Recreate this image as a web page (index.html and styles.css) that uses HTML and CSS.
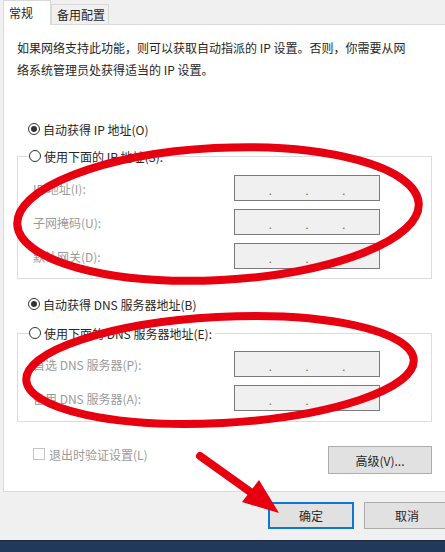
FILE: index.html
```html
<!DOCTYPE html>
<html lang="zh-CN">

<head>
    <meta charset="UTF-8">
    <meta name="viewport" content="width=device-width, initial-scale=1.0">
    <title>Internet 协议版本 4 (TCP/IPv4) 属性</title>
    <link rel="stylesheet" href="styles.css">
</head>

<body>
    <div class="dialog">
        <div class="tabs">
            <div class="tab active">常规</div>
            <div class="tab">备用配置</div>
        </div>

        <div class="panel">
            <p class="intro">如果网络支持此功能，则可以获取自动指派的 IP 设置。否则，你需要从网络系统管理员处获得适当的 IP 设置。</p>

            <div class="option first">
                <span class="radio checked"></span>
                <span>自动获得 IP 地址(O)</span>
            </div>

            <fieldset class="group">
                <legend class="option">
                    <span class="radio"></span>
                    <span>使用下面的 IP 地址(S):</span>
                </legend>
                <div class="field">
                    <label>IP 地址(I):</label>
                    <div class="ip"><span>.</span><span>.</span><span>.</span></div>
                </div>
                <div class="field">
                    <label>子网掩码(U):</label>
                    <div class="ip"><span>.</span><span>.</span><span>.</span></div>
                </div>
                <div class="field">
                    <label>默认网关(D):</label>
                    <div class="ip"><span>.</span><span>.</span><span>.</span></div>
                </div>
            </fieldset>

            <div class="option dns">
                <span class="radio checked"></span>
                <span>自动获得 DNS 服务器地址(B)</span>
            </div>

            <fieldset class="group dns-group">
                <legend class="option">
                    <span class="radio"></span>
                    <span>使用下面的 DNS 服务器地址(E):</span>
                </legend>
                <div class="field">
                    <label>首选 DNS 服务器(P):</label>
                    <div class="ip"><span>.</span><span>.</span><span>.</span></div>
                </div>
                <div class="field">
                    <label>备用 DNS 服务器(A):</label>
                    <div class="ip"><span>.</span><span>.</span><span>.</span></div>
                </div>
            </fieldset>

            <div class="bottom-row">
                <div class="check">
                    <span class="box"></span>
                    <span>退出时验证设置(L)</span>
                </div>
                <button class="btn advanced">高级(V)...</button>
            </div>
        </div>

        <div class="footer">
            <button class="btn default">确定</button>
            <button class="btn">取消</button>
        </div>
    </div>
    <div class="taskbar"></div>

    <!-- red marks drawn over the screenshot -->
    <svg class="marks" width="445" height="552" viewBox="0 0 445 552">
        <ellipse cx="218" cy="214" rx="201" ry="66" transform="rotate(-3 218 214)" />
        <ellipse cx="220" cy="370" rx="194" ry="53" transform="rotate(-3 220 370)" />
        <line x1="200" y1="456" x2="256" y2="496" />
        <polygon points="279,513 242,502 259,480" />
    </svg>
</body>

</html>
```

FILE: styles.css
```css
body {
    font-family: "Noto Sans CJK SC", "Liberation Sans", sans-serif;
    font-size: 12px;
    color: #262626;
    background-color: #f0f0f0;
    margin: 0;
    width: 445px;
    height: 552px;
    overflow: hidden;
    position: relative;
}

.dialog {
    height: 540px;
}

.tabs {
    display: flex;
    height: 24px;
    padding-left: 3px;
    align-items: flex-end;
}

.tab {
    height: 20px;
    line-height: 19px;
    padding: 0 3px 0 5px;
    border: 1px solid #d9d9d9;
    border-bottom: none;
    background: #f0f0f0;
    box-sizing: border-box;
}

.tab.active {
    height: 25px;
    line-height: 23px;
    width: 48px;
    background: white;
    margin-bottom: -1px;
    position: relative;
    z-index: 1;
    border-color: #d9d9d9;
}

.panel {
    background: white;
    border-top: 1px solid #d9d9d9;
    border-left: 1px solid #d9d9d9;
    border-bottom: 1px solid #d9d9d9;
    margin-left: 3px;
    height: 466px;
    padding: 0 13px;
}

.intro {
    margin: 12px 0 0;
    line-height: 22px;
    max-width: 392px;
}

.option {
    display: flex;
    align-items: center;
    gap: 3px;
    height: 20px;
    margin-left: 11px;
}

.option.first {
    margin-top: 38px;
}

.option.dns {
    margin-top: 15px;
}

.radio {
    width: 12px;
    height: 12px;
    border: 1px solid #333;
    border-radius: 50%;
    box-sizing: border-box;
    display: flex;
    align-items: center;
    justify-content: center;
}

.radio.checked::after {
    content: "";
    width: 6px;
    height: 6px;
    border-radius: 50%;
    background: #333;
}

.group {
    border: 1px solid #dcdcdc;
    margin: 7px 0 0;
    padding: 9px 51px 9px 15px;
    min-width: 0;
}

.group legend {
    padding: 0 3px 0 0;
    margin-left: -4px;
    background: white;
}

.dns-group {
    margin-top: 9px;
    padding-top: 8px;
    padding-bottom: 10px;
}

.field {
    display: flex;
    align-items: center;
    justify-content: space-between;
    height: 26px;
    color: #9a9a9a;
}

.field + .field {
    margin-top: 8px;
}

.ip {
    width: 146px;
    height: 26px;
    box-sizing: border-box;
    border: 1px solid #7a7a7a;
    background: #f0f0f0;
    display: flex;
    justify-content: space-evenly;
    align-items: center;
    color: #666;
    font-size: 11px;
    padding-top: 4px;
}

.bottom-row {
    display: flex;
    justify-content: space-between;
    align-items: flex-start;
    margin-top: 24px;
    padding-left: 16px;
}

.check {
    display: flex;
    align-items: center;
    gap: 4px;
    color: #9a9a9a;
    height: 16px;
}

.box {
    width: 12px;
    height: 12px;
    box-sizing: border-box;
    border: 1px solid #c4c4c4;
}

.btn {
    font-family: inherit;
    font-size: 12px;
    color: #262626;
    background: #e1e1e1;
    border: 1px solid #adadad;
    border-radius: 0;
    height: 28px;
    padding: 0;
}

.advanced {
    width: 104px;
}

.footer {
    display: flex;
    gap: 10px;
    padding: 10px 0 0 268px;
}

.footer .btn {
    width: 86px;
    height: 27px;
    flex-shrink: 0;
}

.footer .default {
    border: 2px solid #0a78d4;
}

.taskbar {
    height: 12px;
    background: #213a5c;
    border-top: 1px solid #1b2a40;
}

.marks {
    position: absolute;
    left: 0;
    top: 0;
    pointer-events: none;
}

.marks ellipse,
.marks line {
    fill: none;
    stroke: #e60010;
    stroke-width: 8;
    stroke-linecap: round;
}

.marks polygon {
    fill: #e60010;
}
```
